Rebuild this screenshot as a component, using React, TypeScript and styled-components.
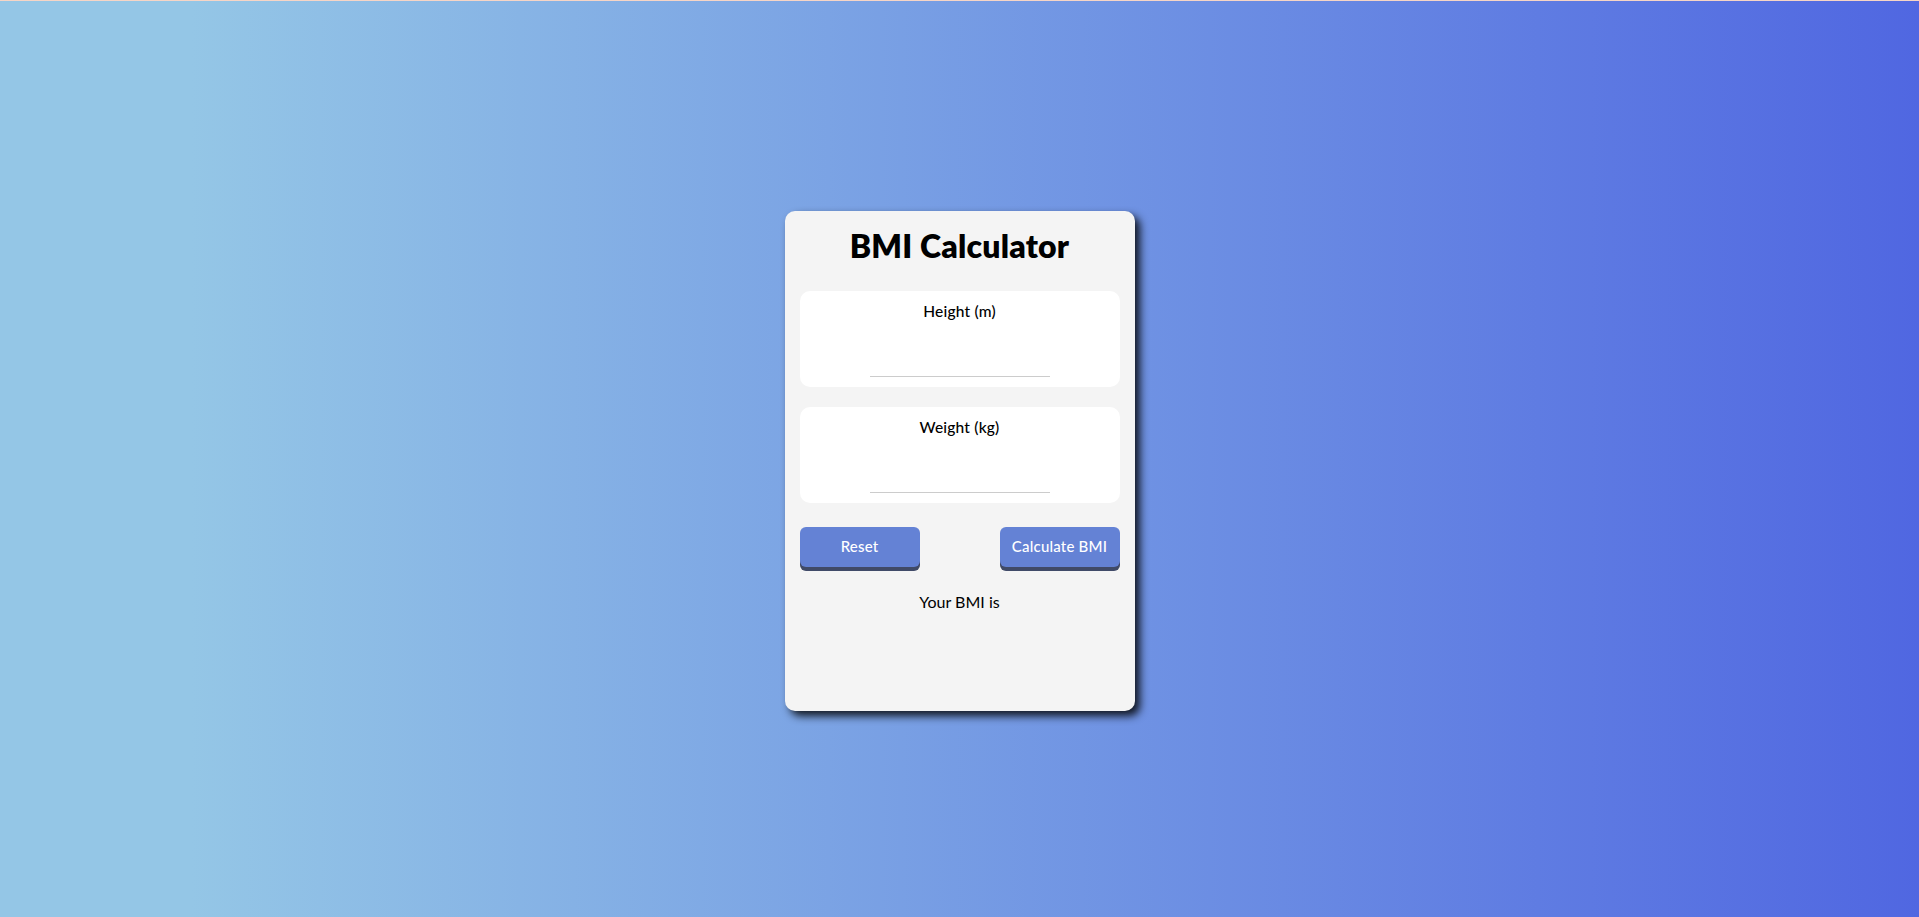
import React, { useState } from "react";
import styled, { createGlobalStyle } from "styled-components";

const GlobalStyle = createGlobalStyle`
  * { box-sizing: border-box; }
  html, body { margin: 0; padding: 0; }
  body {
    font-family: "Lato", "Open Sans", sans-serif;
    background: #f6d5c6;
  }
`;

const Page = styled.main`
  height: 100vh;
  border-top: 1px solid #f6d5c6;
  padding-top: 3px;
  background: linear-gradient(90deg, #94c6e6 10%, #5067e1 100%);
  display: flex;
  align-items: center;
  justify-content: center;
`;

const Card = styled.section`
  width: 350px;
  height: 500px;
  background: #f4f4f4;
  border-radius: 10px;
  box-shadow: 5px 5px 9px rgba(0, 0, 0, 0.85);
  padding: 16px 15px 15px;
  display: flex;
  flex-direction: column;
`;

const Title = styled.h1`
  margin: 0 0 26px;
  text-align: center;
  font-family: "Lato", sans-serif;
  font-weight: 800;
  font-size: 32px;
  line-height: 38px;
  color: #000;
  letter-spacing: 0.2px;
`;

const Field = styled.div<{ $gap?: number }>`
  background: #ffffff;
  border-radius: 10px;
  height: 96px;
  padding: 10px 0 0;
  margin-bottom: ${(p) => p.$gap ?? 0}px;
  display: flex;
  flex-direction: column;
  align-items: center;
`;

const Label = styled.label`
  font-family: "Lato", sans-serif;
  font-weight: 500;
  font-size: 15.5px;
  line-height: 20px;
  color: #000;
  letter-spacing: 0.2px;
`;

const Input = styled.input`
  margin-top: 24px;
  width: 180px;
  height: 32px;
  border: none;
  border-bottom: 1px solid #cccccc;
  outline: none;
  background: transparent;
  text-align: center;
  font-family: "Lato", sans-serif;
  font-size: 16px;
`;

const ButtonRow = styled.div`
  display: flex;
  justify-content: space-between;
  margin-top: 24px;
`;

const Button = styled.button`
  width: 120px;
  height: 40px;
  padding: 0 0 2px;
  border: none;
  border-radius: 6px;
  background: #6482d5;
  color: #ffffff;
  font-family: "Lato", sans-serif;
  font-weight: 500;
  font-size: 15px;
  letter-spacing: 0.2px;
  box-shadow: 0 4px 0 #404a68;
  cursor: pointer;
`;

const Result = styled.p`
  margin: 25px 0 0;
  text-align: center;
  font-family: "Lato", sans-serif;
  font-size: 16px;
  line-height: 20px;
  color: #000;
`;

export default function App() {
  const [height, setHeight] = useState("");
  const [weight, setWeight] = useState("");
  const [bmi, setBmi] = useState("");

  const calc = () => {
    const h = parseFloat(height);
    const w = parseFloat(weight);
    if (h > 0 && w > 0) setBmi((w / (h * h)).toFixed(1));
  };

  return (
    <>
      <GlobalStyle />
      <Page>
        <Card>
          <Title>BMI Calculator</Title>
          <Field $gap={20}>
            <Label htmlFor="h">Height (m)</Label>
            <Input id="h" value={height} onChange={(e) => setHeight(e.target.value)} />
          </Field>
          <Field>
            <Label htmlFor="w">Weight (kg)</Label>
            <Input id="w" value={weight} onChange={(e) => setWeight(e.target.value)} />
          </Field>
          <ButtonRow>
            <Button
              onClick={() => {
                setHeight("");
                setWeight("");
                setBmi("");
              }}
            >
              Reset
            </Button>
            <Button onClick={calc}>Calculate BMI</Button>
          </ButtonRow>
          <Result>Your BMI is {bmi}</Result>
        </Card>
      </Page>
    </>
  );
}
